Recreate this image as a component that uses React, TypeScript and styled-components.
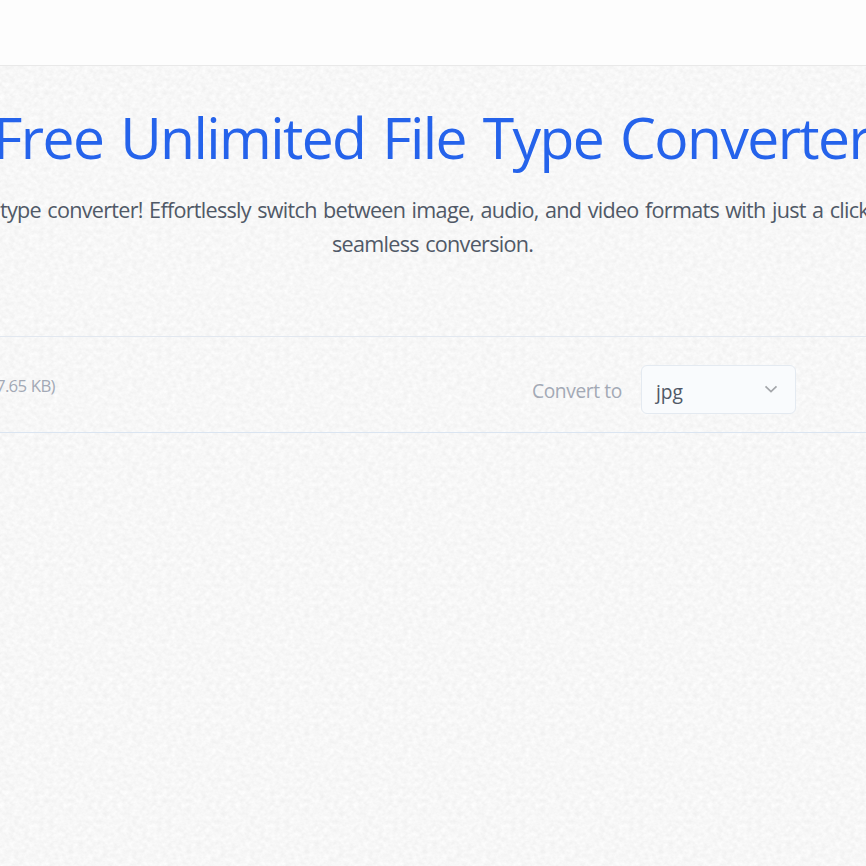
import React from "react";
import styled, { createGlobalStyle } from "styled-components";

const grain = `url("data:image/svg+xml,${encodeURIComponent(
  `<svg xmlns="http://www.w3.org/2000/svg" width="118" height="118"><filter id="n" x="0" y="0" width="100%" height="100%" color-interpolation-filters="sRGB"><feTurbulence type="fractalNoise" baseFrequency="0.2 0.24" numOctaves="3" seed="21" stitchTiles="stitch"/><feColorMatrix values="0.07 0 0 0 0.934  0.07 0 0 0 0.934  0.07 0 0 0 0.934  0 0 0 0 1"/></filter><rect width="118" height="118" filter="url(#n)"/></svg>`
)}")`;

const Global = createGlobalStyle`
  * { box-sizing: border-box; }
  body { margin: 0; overflow: hidden; }
`;

const Page = styled.div`
  width: 100%;
  height: 866px;
  overflow: hidden;
  background: #f8f8f8 ${grain} 0 7px;
  font-family: "Open Sans", "Noto Sans", sans-serif;
  color: #505967;
`;

const Navbar = styled.header`
  height: 66px;
  background: #fdfdfd;
  border-bottom: 1px solid #e9e9e9;
`;

const Hero = styled.section`
  height: 270px;
  padding-top: 37px;
  overflow: hidden;
  white-space: nowrap;
`;

const Title = styled.h1`
  margin: 0 0 0 -7px;
  font-size: 57px;
  line-height: 68px;
  font-weight: 400;
  letter-spacing: -1.6px;
  word-spacing: 3.6px;
  color: #2563eb;
`;

const Intro = styled.div`
  margin-top: 22px;
  font-size: 21.6px;
  line-height: 33.6px;
  letter-spacing: -0.72px;
  word-spacing: 1.45px;
`;

const Line = styled.p<{ $indent?: number }>`
  margin: 0;
  padding-left: ${({ $indent = 0 }) => $indent}px;
`;

const FileRow = styled.section`
  height: 97px;
  padding-right: 70px;
  display: flex;
  align-items: flex-start;
  border-top: 1px solid #e2e8f0;
  border-bottom: 1px solid #dbe5f1;
  color: #a3a9b5;
`;

const FileSize = styled.span`
  margin: 37px auto 0 -4px;
  font-size: 16.8px;
  line-height: 24px;
  letter-spacing: -0.7px;
  word-spacing: 0.8px;
`;

const Label = styled.span`
  width: 109px;
  margin-top: 40px;
  font-size: 19.2px;
  line-height: 28px;
  letter-spacing: -0.4px;
`;

const Select = styled.button`
  width: 155px;
  height: 49px;
  margin-top: 28px;
  padding: 4px 17px 0 14px;
  display: flex;
  align-items: center;
  justify-content: space-between;
  border: 1px solid #e4eaf1;
  border-radius: 6px;
  background: #f9fbfd;
  color: #505967;
  font: 400 19.2px/28px "Open Sans", "Noto Sans", sans-serif;
  letter-spacing: 0;
`;

const Chevron = styled.svg`
  width: 14px;
  height: 10px;
  margin-top: -5px;
  fill: none;
  stroke: #a4a6aa;
  stroke-width: 1.7;
`;

export default function App() {
  return (
    <Page>
      <Global />
      <Navbar />
      <Hero>
        <Title>Free Unlimited File Type Converter</Title>
        <Intro>
          <Line>type converter! Effortlessly switch between image, audio, and video formats with just a click</Line>
          <Line $indent={332}>seamless conversion.</Line>
        </Intro>
      </Hero>
      <FileRow>
        <FileSize>7.65 KB)</FileSize>
        <Label>Convert to</Label>
        <Select>
          jpg
          <Chevron viewBox="0 0 14 10">
            <path d="M1.5 2.3 L7 7.5 L12.5 2.3" />
          </Chevron>
        </Select>
      </FileRow>
    </Page>
  );
}
